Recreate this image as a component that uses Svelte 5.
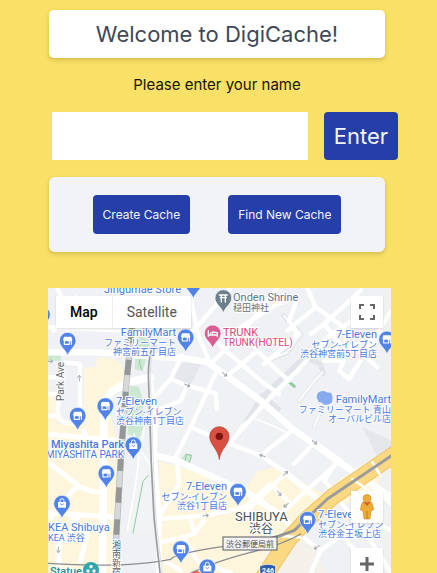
<script>
  let name = $state('');
  let mapType = $state('map');

  const shops = [
    [71, 215], [425, 205], [1029, 211], [184, 411], [101, 440],
    [187, 613], [582, 668], [791, 752], [411, 840], [448, 44], [-6, 137]
  ];
  const bags = [[268, 528], [54, 704], [490, 895]];
  const arrows = [
    [542, 271, 40], [430, 304, 25], [812, 475, 38], [655, 515, 200], [725, 568, -45],
    [706, 628, 50], [726, 664, 140], [485, 695, -8], [818, 790, 145], [106, 282, -90],
    [43, 798, 90], [18, 232, 0]
  ];

  const labels = [
    { x: 56, y: 5, anchor: 'start', en: 'Jingumae Store', jp: [] },
    { x: 128, y: 48, anchor: 'end', en: 'FamilyMart', jp: ['ファミリーマート', '神宮前五丁目店'] },
    { x: 329, y: 50, anchor: 'end', en: '7-Eleven', jp: ['セブン-イレブン', '渋谷神宮前5丁目店'] },
    { x: 343, y: 115, anchor: 'end', en: 'FamilyMart', jp: ['ファミリーマート 青山', 'オーバルビル店'] },
    { x: 68, y: 117, anchor: 'start', en: '7-Eleven', jp: ['セブン-イレブン', '渋谷神南1丁目店'] },
    { x: 76, y: 160, anchor: 'end', en: 'Miyashita Park', jp: ['MIYASHITA PARK'], strong: true },
    { x: 0, y: 243, anchor: 'start', en: 'KEA Shibuya', jp: ['KEA 渋谷'] },
    { x: 179, y: 202, anchor: 'end', en: '7-Eleven', jp: ['セブン-イレブン', '渋谷1丁目店'] },
    { x: 270, y: 230, anchor: 'start', en: '7-Eleven', jp: ['セブン-イレブン', '渋谷金王坂上店'] },
    { x: 185, y: 13, anchor: 'start', en: 'Onden Shrine', jp: ['穏田神社'], color: '#5f7280' },
    { x: 175, y: 48, anchor: 'start', en: 'TRUNK', jp: ['TRUNK(HOTEL)'], color: '#d8467e' }
  ];
</script>

{#snippet pin(x, y, color)}
  <path
    transform="translate({x} {y})"
    fill={color}
    stroke="#fff"
    stroke-width="2"
    d="M0 0C-4-17-25-27-25-45A25 25 0 0 1 25-45C25-27 4-17 0 0Z"
  />
{/snippet}

<main>
  <h1>Welcome to DigiCache!</h1>

  <form onsubmit={(e) => e.preventDefault()}>
    <label for="name">Please enter your name</label>
    <div class="entry">
      <input id="name" type="text" bind:value={name} />
      <button class="enter" type="submit">Enter</button>
    </div>
  </form>

  <section class="actions">
    <button type="button">Create Cache</button>
    <button type="button">Find New Cache</button>
  </section>

  <section class="map" aria-label="Map">
    <svg class="tiles" viewBox="0 0 343 285" preserveAspectRatio="xMidYMin slice">
      <rect width="343" height="285" fill="#eff1f4" />
      <g transform="translate(-4 -4) scale(0.33333)" fill="none" stroke-linecap="round" stroke-linejoin="round">
        <g fill="#fdf6dc">
          <path d="M12 330H40V420H160L185 330 155 250 160 220 205 222 235 240 240 290 205 320 185 345 225 480 215 867H12Z" />
          <path d="M120 250H235L236 290 190 320 170 440H120Z" />
          <path d="M290 500L335 520 342 740H255L265 620Z" fill="#f1f3f4" />
          <path d="M345 530L580 600 690 690 590 680 560 700 350 715Z" />
          <path d="M350 720L690 640 760 700 690 770 640 867H350Z" />
          <path d="M640 560L690 550 860 640 800 690 720 720 590 640Z" />
          <path d="M880 590L960 540 1010 560 1000 620 900 660Z" />
          <path d="M700 790L780 740 850 867H680Z" fill="#f3f1ea" />
        </g>
        <path d="M405 235L472 240 440 305 383 290Z M955 430L1042 470V490L1000 520Z" fill="#e5e7ec" />
        <g fill="#cde8d2">
          <path d="M278 150L320 170 310 215 295 262 272 255Z" />
          <path d="M258 305L285 308 298 350 298 435 285 465 250 450Z" />
          <path d="M12 203L52 205 50 230H12Z" />
          <path d="M404 532L425 508 445 512 437 538Z" />
        </g>
        <g stroke="#8fcaa0" stroke-width="3">
          <path d="M295 215Q278 235 294 255M404 530L424 530 426 512 443 514 436 536" />
          <path d="M313 574L297 592 267 748" />
          <path d="M733 292L751 307" stroke-width="9" />
        </g>

        <g stroke="#e0e3e8" stroke-width="15">
          <path d="M703 375L660 335 780 220 830 240 838 268M655 335L590 440M720 95L770 150 730 205 680 225" />
          <path d="M835 265L812 290 765 350M830 380L810 430" stroke-width="12" />
        </g>
        <g stroke="#fff" stroke-width="13">
          <path d="M720 95L770 150 730 205 680 225M835 265L812 290 765 350M830 380L810 430" stroke="#f8f9fa" stroke-width="8" />
          <path d="M12 205H160L360 220M360 220L420 222 490 235 552 278 650 350 740 430 880 530 1042 640" stroke-width="19" />
          <path d="M12 130L240 140M30 140L95 40M70 140L65 205M40 12L80 100" />
          <path d="M62 235V235L108 240V420M12 280H60M12 330H45L40 400 60 415 108 422M12 395H45" />
          <path d="M320 280L250 295 205 322 180 350 175 867" stroke-width="23" />
          <path d="M12 450L165 465 225 470M120 440L130 470M12 535L110 610 160 625M110 610L90 615 20 700M12 685L210 700M80 695L130 750 110 830M12 755L70 760 100 700M45 720V867" stroke-width="15" />
          <path d="M320 300L335 380 330 520 345 690 345 867" stroke-width="16" />
          <path d="M335 515L400 530 530 590 600 620 690 680 760 740" stroke-width="19" />
          <path d="M340 330L380 285 415 215M380 285L430 305 515 328 519 375M430 305L410 350 350 375M519 260L440 430 392 524" />
          <path d="M440 430L560 480 650 515 740 575 830 650M560 475L660 360 760 260 850 160 940 100M750 435L650 515" />
          <path d="M440 50L465 160 500 240M440 150L560 12M500 240L600 140 700 12M500 150L545 200 650 290 705 330M552 275L640 200 590 130 700 60" />
          <path d="M700 60L760 45 735 110 760 150 720 190 660 240M640 200L700 260 735 290M790 12L815 70 900 130 910 190 1042 150" />
          <path d="M815 70L730 140M800 150L840 120 890 180 840 230 900 230 885 260 915 285 1042 80M840 120L950 20M945 200L1000 250" />
          <path d="M750 540L812 475 890 530 780 625 700 700M725 568L660 630 600 690M725 568L810 640M880 530L840 590 890 640M690 610L740 660" />
          <path d="M345 705L485 695 600 670 680 600M400 535L405 600 350 690M350 775L450 750 480 710M360 830L410 860M420 760L460 830 560 867M440 700L450 750" />
          <path d="M600 800L760 740M760 745L830 800 800 867M830 800L960 700 1042 740M880 640L960 740 1042 867M890 750L960 830M940 560L1042 660" />
        </g>
        <path d="M570 465Q600 390 650 410T735 450" stroke="#fff" stroke-width="5" />
        <path d="M270 450L285 520 275 600 250 740M300 430L290 500 330 560" stroke="#fff" stroke-width="5" />

        <path d="M1060 505L870 635 790 705 735 765 655 885" stroke="#eec568" stroke-width="51" />
        <path d="M1060 505L870 635 790 705 735 765 655 885" stroke="#fbd982" stroke-width="45" />
        <path d="M925 585L975 620M985 535L1010 575M700 755L770 760" stroke="#fff" stroke-width="8" />
        <path d="M1050 510L850 645 750 740 690 762" stroke="#999b9d" stroke-width="9" />
        <path d="M760 735Q690 765 540 787T380 826Q250 853 12 838M770 750Q720 780 620 805T440 867" stroke="#8b8d90" stroke-width="4" />
        <path d="M325 190Q310 230 314 300L322 540 330 700 348 867" stroke="#999b9e" stroke-width="5" />
        <path d="M331 190Q316 230 320 300L328 540 336 700 354 867" stroke="#dfe1e3" stroke-width="3" />

        <g stroke-linecap="butt">
          <path d="M265 120L247 300 232 500 216 770" stroke="#b4b6b8" stroke-width="19" />
          <path d="M265 120L247 300 232 500 216 770" stroke="#d6d8da" stroke-width="15" />
          <path d="M265 120L247 300 232 500 216 770" stroke="#949698" stroke-width="17" stroke-dasharray="46 50" stroke-dashoffset="-12" />
        </g>

        <g stroke="#a3a9af" stroke-width="3">
          {#each arrows as [x, y, r]}
            <path transform="translate({x} {y}) rotate({r})" d="M-9 0H8M2-5L8 0 2 5" />
          {/each}
        </g>

        {#each shops as [x, y]}
          {@render pin(x, y, '#5183e8')}
          <g transform="translate({x} {y - 45})">
            <path fill="#fff" d="M-11-12H11L14-2Q10 4 6 0 1 4-3 0-8 4-14-2Z" />
            <path stroke="#fff" stroke-width="3.5" d="M-10 0V11H5V0M11 0V11" />
          </g>
        {/each}
        {#each bags as [x, y]}
          {@render pin(x, y, '#5183e8')}
          <g transform="translate({x} {y - 45})">
            <path fill="#fff" d="M-12-5H12V12H-12Z" />
            <path stroke="#fff" stroke-width="3" d="M-6-5V-9A6 6 0 0 1 6-9V-5" />
            <path stroke="#5183e8" stroke-width="2.5" d="M-5 1Q0 8 5 1" />
          </g>
        {/each}

        {@render pin(538, 87, '#6b7f8c')}
        <path d="M526 33H550M529 41H547M532 34V54M544 34V54" stroke="#fff" stroke-width="4" />
        {@render pin(506, 193, '#dc5b91')}
        <path d="M493 140V157M493 153H520V158M520 152V146L505 144V151M499 147H500" stroke="#fff" stroke-width="4" />

        <path fill="#86aaf0" d="M818 340Q818 320 840 321 850 327 862 327 868 340 864 355 852 366 838 361 834 354 824 354Z" />

        <circle cx="141" cy="858" r="24" fill="#35a5ad" />
        <g fill="#fff"><circle cx="141" cy="848" r="5" /><circle cx="132" cy="861" r="5" /><circle cx="150" cy="861" r="5" /></g>
        <circle cx="457" cy="876" r="15" fill="#e56558" />
        <path d="M648 846Q672 836 695 846L694 885H649Z" fill="#2e5caa" stroke="#fff" stroke-width="2" />

        <path fill="#d94f42" stroke="#b73a30" stroke-width="2" d="M526 525C522 495 497 482 497 457A29 29 0 0 1 555 457C555 482 530 495 526 525Z" />
        <circle cx="526" cy="457" r="11" fill="#7a150f" />
      </g>

      <g class="labels">
        {#each labels as l}
          <g text-anchor={l.anchor} fill={l.color ?? '#4678dc'}>
            <text class="en" class:strong={l.strong} x={l.x} y={l.y}>{l.en}</text>
            {#each l.jp as line, i}
              <text class="jp" class:latin={/^[A-Z]+[ (]?[A-Z]+\)?$/.test(line)} x={l.x} y={l.y + 10 + i * 9}>{line}</text>
            {/each}
          </g>
        {/each}
        <text class="road" transform="translate(16 113) rotate(-90)">Park Ave</text>
        <text class="rail" x="68" y="252">湘南新宿</text>
        <text class="area" x="187" y="233">SHIBUYA</text>
        <text class="areajp" x="201" y="245">渋谷</text>
        <text class="en strong" x="2" y="287" fill="#278b94">Statue</text>
      </g>
      <rect x="175" y="249" width="54" height="13" fill="#f3f3f3" stroke="#55585b" />
      <text class="station" x="202" y="259" text-anchor="middle">渋谷郵便局前</text>
      <text class="shield" x="220" y="285" text-anchor="middle">246</text>
    </svg>

    <div class="types">
      <button type="button" class:on={mapType === 'map'} onclick={() => (mapType = 'map')}>Map</button>
      <button type="button" class:on={mapType === 'satellite'} onclick={() => (mapType = 'satellite')}>Satellite</button>
    </div>
    <button class="tool full" type="button" aria-label="Toggle fullscreen view">
      <svg width="16" height="16" viewBox="0 0 16 16" fill="none" stroke="#666" stroke-width="2">
        <path d="M1 5V1H5M11 1H15V5M15 11V15H11M5 15H1V11" />
      </svg>
    </button>
    <button class="tool person" type="button" aria-label="Street View">
      <svg width="16" height="26" viewBox="0 0 16 26">
        <path fill="#efac35" stroke="#c88824" stroke-width=".6" d="M4 8H12Q14 9 14.500 16L12 17 11 25H5L4 17 1.500 16Q2 9 4 8Z" />
        <path fill="#d45b2c" d="M4.500 8H11.500L8 12Z" />
        <circle cx="8" cy="4.500" r="4" fill="#efac35" stroke="#c88824" stroke-width=".6" />
        <path stroke="#bd7b20" d="M8 17V25" />
      </svg>
    </button>
    <button class="tool zoom" type="button" aria-label="Zoom in">
      <svg width="16" height="16" viewBox="0 0 16 16" stroke="#666" stroke-width="3">
        <path d="M8 1V15M1 8H15" />
      </svg>
    </button>
  </section>
</main>

<style>
  :global(body) {
    background: #f9e066;
  }
  main {
    box-sizing: border-box;
    height: 100vh;
    min-height: 500px;
    overflow: hidden;
    display: flex;
    flex-direction: column;
    padding: 10px 39px 0 48px;
    font-family: Inter, "Noto Sans CJK JP", sans-serif;
  }
  button {
    border: 0;
    font-family: inherit;
    cursor: pointer;
  }
  h1 {
    margin: 0 13px 0 1px;
    border-radius: 5px;
    background: #fff;
    box-shadow: 0 2px 4px rgb(90 80 20 / 25%);
    color: #404857;
    font-size: 22px;
    font-weight: 400;
    line-height: 48px;
    text-align: center;
  }
  form {
    display: flex;
    flex-direction: column;
  }
  label {
    margin: 15px 13px 15px 1px;
    color: #15130a;
    font-size: 15px;
    line-height: 24px;
    text-align: center;
  }
  .entry {
    display: flex;
    gap: 16px;
    margin-left: 4px;
  }
  input {
    flex: 1;
    min-width: 0;
    box-sizing: border-box;
    height: 48px;
    padding: 0 12px;
    border: 0;
    background: #fff;
    font: 22px Inter, sans-serif;
  }
  .enter,
  .actions button {
    border-radius: 4px;
    background: #263fa8;
    color: #f2f4fb;
  }
  .enter {
    padding: 0 10px;
    font-size: 22px;
  }
  .actions {
    display: flex;
    justify-content: center;
    gap: 38px;
    margin: 17px 13px 0 1px;
    padding: 18px 0;
    border-radius: 6px;
    background: #f2f3f6;
    box-shadow: 0 2px 4px rgb(90 80 20 / 25%);
  }
  .actions button {
    height: 39px;
    padding: 0 10px;
    font-size: 12px;
  }
  .map {
    position: relative;
    flex: 1;
    min-height: 0;
    margin: 36px 7px 0 0;
    overflow: hidden;
    font-family: Roboto, "Noto Sans CJK JP", sans-serif;
  }
  .tiles {
    display: block;
    width: 100%;
    height: 100%;
  }
  .labels text {
    stroke: #fff;
    stroke-width: 2px;
    stroke-linejoin: round;
    paint-order: stroke;
  }
  .en {
    font-size: 11px;
  }
  .strong {
    font-weight: 500;
  }
  .jp {
    font-size: 9px;
  }
  .latin {
    font-size: 10px;
  }
  .road {
    fill: #63686e;
    font-size: 10px;
  }
  .rail {
    fill: #606468;
    font-size: 9px;
    writing-mode: vertical-rl;
  }
  .area {
    fill: #4c5156;
    font-size: 13px;
  }
  .areajp {
    fill: #4c5156;
    font-size: 12px;
  }
  .station {
    fill: #4c5156;
    font-size: 8px;
  }
  .shield {
    fill: #fff;
    font-size: 7px;
    font-weight: 700;
  }
  .types {
    position: absolute;
    top: 8px;
    left: 8px;
    display: flex;
    box-shadow: 0 1px 2px rgb(0 0 0 / 15%);
  }
  .types button {
    height: 32px;
    padding: 0 14px;
    background: #fff;
    color: #565656;
    font-size: 14px;
  }
  .types button + button {
    border-left: 1px solid #eee;
  }
  .types .on {
    color: #000;
    font-weight: 500;
  }
  .tool {
    position: absolute;
    right: 8px;
    display: grid;
    place-items: center;
    width: 32px;
    height: 32px;
    padding: 0;
    background: #fff;
    box-shadow: 0 1px 2px rgb(0 0 0 / 15%);
  }
  .full {
    top: 8px;
  }
  .person {
    bottom: 50px;
  }
  .zoom {
    bottom: -7px;
  }
</style>
